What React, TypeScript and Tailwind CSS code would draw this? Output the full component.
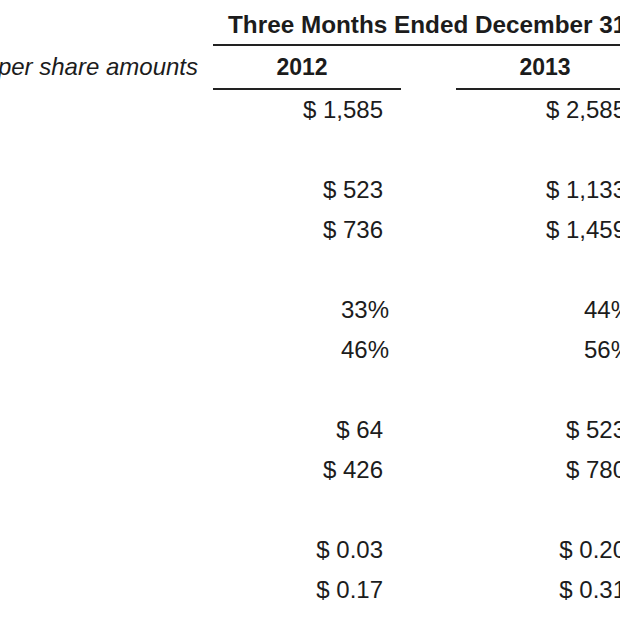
import React from 'react';

// Quarterly results table, cropped to the visible window
type Row = { a: string; b: string; pct?: boolean } | null;

const rows: Row[] = [
  { a: '$ 1,585', b: '$ 2,585' },
  null,
  { a: '$ 523', b: '$ 1,133' },
  { a: '$ 736', b: '$ 1,459' },
  null,
  { a: '33%', b: '44%', pct: true },
  { a: '46%', b: '56%', pct: true },
  null,
  { a: '$ 64', b: '$ 523' },
  { a: '$ 426', b: '$ 780' },
  null,
  { a: '$ 0.03', b: '$ 0.20' },
  { a: '$ 0.17', b: '$ 0.31' },
];

const App: React.FC = () => {
  return (
    <div
      className="w-[620px] h-[620px] overflow-hidden bg-white text-[#1c1c1c]"
      style={{ fontFamily: '"Liberation Sans", Arial, sans-serif' }}
    >
      <div className="w-[644px]">
        {/* Period header */}
        <div className="flex">
          <div className="w-[213px] shrink-0" />
          <div className="w-[431px] shrink-0 h-[46px] border-b-2 border-[#222] pt-[6px] pl-[15px] leading-[38px] text-[24.3px] font-bold whitespace-nowrap">
            Three Months Ended December 31
          </div>
        </div>

        {/* Year header */}
        <div className="flex">
          <div className="w-[213px] shrink-0 h-[44px] pr-[15px] text-[24px] italic leading-[42px] whitespace-nowrap overflow-hidden flex justify-end">
            <span>In millions, except per share amounts</span>
          </div>
          <div className="w-[188px] shrink-0 h-[44px] border-b-2 border-[#222] pr-[10px] text-center text-[23px] font-bold leading-[42px]">
            2012
          </div>
          <div className="w-[55px] shrink-0" />
          <div className="w-[188px] shrink-0 h-[44px] border-b-2 border-[#222] pr-[10px] text-center text-[23px] font-bold leading-[42px]">
            2013
          </div>
        </div>

        {/* Values */}
        {rows.map((row, i) => (
          <div key={i} className="flex h-10 text-[24px] leading-10 whitespace-nowrap">
            <div className="w-[213px] shrink-0" />
            <div className={`w-[188px] shrink-0 text-right ${row?.pct ? 'pr-[12px]' : 'pr-[18px]'}`}>
              {row?.a}
            </div>
            <div className="w-[55px] shrink-0" />
            <div className={`w-[188px] shrink-0 text-right ${row?.pct ? 'pr-[12px]' : 'pr-[18px]'}`}>
              {row?.b}
            </div>
          </div>
        ))}
      </div>
    </div>
  );
};

export default App;
